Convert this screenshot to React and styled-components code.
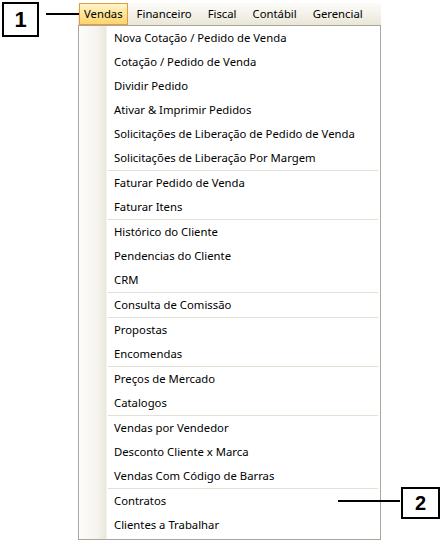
import React from "react";
import styled, { createGlobalStyle } from "styled-components";

const Global = createGlobalStyle`
  html, body { margin: 0; padding: 0; background: #fff; }
  body { width: 444px; height: 545px; overflow: hidden; }
`;

const Page = styled.div`
  position: relative;
  width: 444px;
  height: 545px;
  padding: 3px 0 0 78px;
  box-sizing: border-box;
  font-family: "Noto Sans", "Open Sans", sans-serif;
`;

const MenuBar = styled.div`
  display: flex;
  align-items: stretch;
  width: 303px;
  height: 22px;
  box-sizing: border-box;
  padding-left: 1px;
  background: linear-gradient(to bottom, #fcfbf8 0%, #f4f2ea 50%, #e9e6d6 100%);
`;

const BarItem = styled.div`
  display: flex;
  align-items: center;
  box-sizing: border-box;
  padding: 0 ${(p) => (p.$active ? 4 : 7)}px 1px;
  margin-right: ${(p) => (p.$active ? 1 : 0)}px;
  font-size: 11.3px;
  color: #000;
  border: ${(p) => (p.$active ? "1px solid #e39b3e" : "1px solid transparent")};
  background: ${(p) =>
    p.$active ? "linear-gradient(to bottom, #fff4cc 0%, #fde392 55%, #fbd470 100%)" : "transparent"};
`;

const Dropdown = styled.div`
  width: 303px;
  height: 515px;
  box-sizing: border-box;
  border: 1px solid #a9a79c;
  padding: 0 1px 2px 0;
  background:
    linear-gradient(to right, #fdfcfa 0px, #f6f4ee 18px, #eae7db 27px, #ffffff 28px) no-repeat;
  display: flex;
  flex-direction: column;
`;

const Item = styled.div`
  height: 24px;
  box-sizing: border-box;
  display: flex;
  align-items: center;
  padding: 0 0 2px 35px;
  font-size: 11.3px;
  color: #000;
  white-space: nowrap;
`;

const Sep = styled.div`
  height: 1px;
  margin-left: 29px;
  margin-right: 1px;
  background: #e3e0d4;
`;

const Callout = styled.div`
  position: absolute;
  left: ${(p) => p.$x}px;
  top: ${(p) => p.$y}px;
  width: ${(p) => p.$w}px;
  height: ${(p) => p.$h}px;
  box-sizing: border-box;
  border: 2px solid #000;
  background: #fff;
  display: flex;
  align-items: center;
  justify-content: center;
  font-family: "Liberation Sans", Arial, sans-serif;
  font-weight: bold;
  font-size: ${(p) => p.$fs}px;
  color: #000;
`;

const Leader = styled.div`
  position: absolute;
  left: ${(p) => p.$x}px;
  top: ${(p) => p.$y}px;
  width: ${(p) => p.$w}px;
  height: 2px;
  background: #000;
`;

const groups = [
  [
    "Nova Cotação / Pedido de Venda",
    "Cotação / Pedido de Venda",
    "Dividir Pedido",
    "Ativar & Imprimir Pedidos",
    "Solicitações de Liberação de Pedido de Venda",
    "Solicitações de Liberação Por Margem",
  ],
  ["Faturar Pedido de Venda", "Faturar Itens"],
  ["Histórico do Cliente", "Pendencias do Cliente", "CRM"],
  ["Consulta de Comissão"],
  ["Propostas", "Encomendas"],
  ["Preços de Mercado", "Catalogos"],
  ["Vendas por Vendedor", "Desconto Cliente x Marca", "Vendas Com Código de Barras"],
  ["Contratos", "Clientes a Trabalhar"],
];

const bar = ["Vendas", "Financeiro", "Fiscal", "Contábil", "Gerencial"];

export default function App() {
  return (
    <>
      <Global />
      <Page>
        <MenuBar>
          {bar.map((b, i) => (
            <BarItem key={b} $active={i === 0}>
              {b}
            </BarItem>
          ))}
        </MenuBar>
        <Dropdown>
          {groups.map((g, gi) => (
            <React.Fragment key={gi}>
              {gi > 0 && <Sep />}
              {g.map((t) => (
                <Item key={t}>{t}</Item>
              ))}
            </React.Fragment>
          ))}
        </Dropdown>
        <Callout $x={2} $y={2} $w={37} $h={35} $fs={22}>1</Callout>
        <Leader $x={46} $y={13} $w={33} />
        <Leader $x={338} $y={500} $w={62} />
        <Callout $x={401} $y={487} $w={39} $h={32} $fs={20}>2</Callout>
      </Page>
    </>
  );
}
